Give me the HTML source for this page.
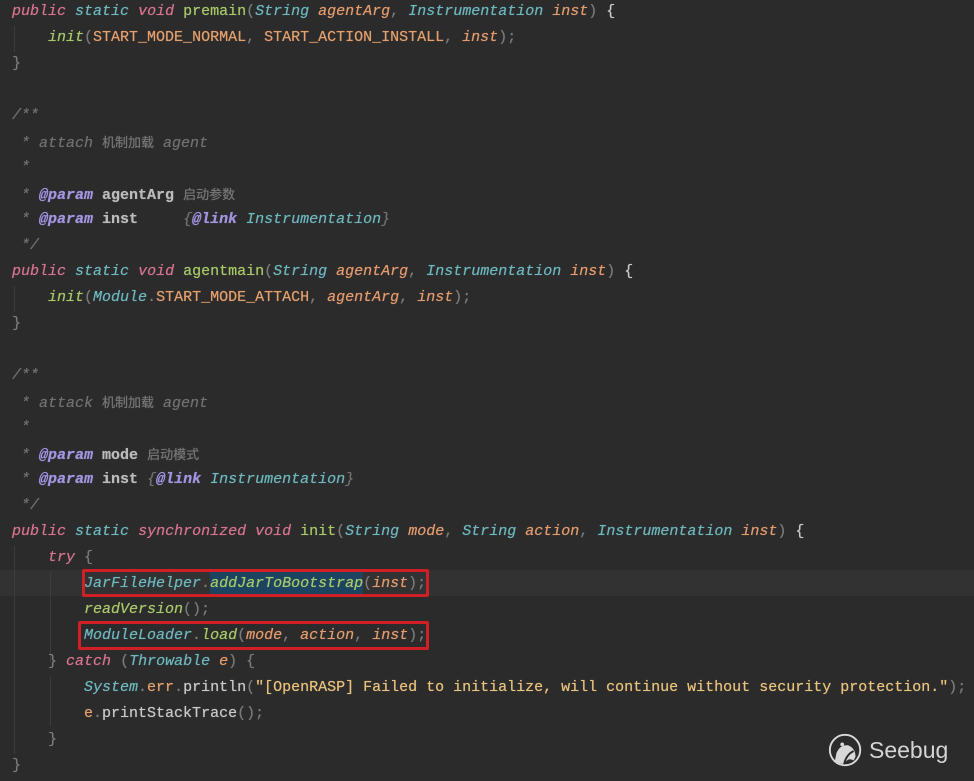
<!DOCTYPE html>
<html><head><meta charset="utf-8"><style>
html,body{margin:0;padding:0}
body{width:974px;height:781px;background:#2b2b2c;position:relative;overflow:hidden;font-family:"Liberation Mono","Noto Sans CJK SC",monospace;font-size:15px;color:#a9b7c6}
.l{position:absolute;left:12px;height:26px;line-height:26px;white-space:pre;text-shadow:0 0 0.6px currentColor}
i{font-style:italic}
.k{color:#d6728e}.s{color:#6cb6bc}.m{color:#a8c868}.t{color:#6cb6bc;font-style:italic}
.p{color:#e39a6c;font-style:italic}.c{color:#e39f6c}.g{color:#7a7a7a}.cm{color:#707070;font-style:italic}
.at{color:#a394e0;font-weight:bold;font-style:italic}.pn{color:#bbbbbb;font-weight:bold}
.st{color:#e8c27c}.w{color:#c9c9c9}
.cj{font-family:"Noto Sans CJK SC",sans-serif;font-size:13px;color:#767676;font-style:normal}
.guide{position:absolute;width:1px;background:#3c3c3c}
.box{position:absolute;border:3px solid #d01f25;box-sizing:border-box;border-radius:2px}
</style></head><body>
<div style="position:absolute;left:0;top:570px;width:974px;height:26px;background:#323233"></div>
<div class="guide" style="left:14px;top:26px;height:26px"></div>
<div class="guide" style="left:14px;top:286px;height:26px"></div>
<div class="guide" style="left:14px;top:546px;height:208px"></div>
<div class="guide" style="left:50px;top:572px;height:90px"></div>
<div class="guide" style="left:50px;top:676px;height:50px"></div>

<div class="l" style="top:-1px"><i class="k">public</i> <i class="s">static</i> <i class="k">void</i> <span class="m">premain</span><span class="g">(</span><span class="t">String</span> <span class="p">agentArg</span><span class="g">,</span> <span class="t">Instrumentation</span> <span class="p">inst</span><span class="g">)</span> <span class="w">{</span></div>
<div class="l" style="top:25px">    <i class="m">init</i><span class="g">(</span><span class="c">START_MODE_NORMAL</span><span class="g">,</span> <span class="c">START_ACTION_INSTALL</span><span class="g">,</span> <span class="p">inst</span><span class="g">);</span></div>
<div class="l" style="top:51px"><span class="g">}</span></div>
<div class="l" style="top:103px"><span class="cm">/**</span></div>
<div class="l" style="top:129px"><span class="cm"> * attach <span class="cj">机制加载</span> agent</span></div>
<div class="l" style="top:155px"><span class="cm"> *</span></div>
<div class="l" style="top:181px"><span class="cm"> * </span><span class="at">@param</span> <span class="pn">agentArg</span> <span class="cj">启动参数</span></div>
<div class="l" style="top:207px"><span class="cm"> * </span><span class="at">@param</span> <span class="pn">inst</span>     <span class="cm">{</span><span class="at">@link</span> <span class="t">Instrumentation</span><span class="cm">}</span></div>
<div class="l" style="top:233px"><span class="cm"> */</span></div>
<div class="l" style="top:259px"><i class="k">public</i> <i class="s">static</i> <i class="k">void</i> <span class="m">agentmain</span><span class="g">(</span><span class="t">String</span> <span class="p">agentArg</span><span class="g">,</span> <span class="t">Instrumentation</span> <span class="p">inst</span><span class="g">)</span> <span class="w">{</span></div>
<div class="l" style="top:285px">    <i class="m">init</i><span class="g">(</span><span class="t">Module</span><span class="g">.</span><span class="c">START_MODE_ATTACH</span><span class="g">,</span> <span class="p">agentArg</span><span class="g">,</span> <span class="p">inst</span><span class="g">);</span></div>
<div class="l" style="top:311px"><span class="g">}</span></div>
<div class="l" style="top:363px"><span class="cm">/**</span></div>
<div class="l" style="top:389px"><span class="cm"> * attack <span class="cj">机制加载</span> agent</span></div>
<div class="l" style="top:415px"><span class="cm"> *</span></div>
<div class="l" style="top:441px"><span class="cm"> * </span><span class="at">@param</span> <span class="pn">mode</span> <span class="cj">启动模式</span></div>
<div class="l" style="top:467px"><span class="cm"> * </span><span class="at">@param</span> <span class="pn">inst</span> <span class="cm">{</span><span class="at">@link</span> <span class="t">Instrumentation</span><span class="cm">}</span></div>
<div class="l" style="top:493px"><span class="cm"> */</span></div>
<div class="l" style="top:519px"><i class="k">public</i> <i class="s">static</i> <i class="k">synchronized</i> <i class="k">void</i> <span class="m">init</span><span class="g">(</span><span class="t">String</span> <span class="p">mode</span><span class="g">,</span> <span class="t">String</span> <span class="p">action</span><span class="g">,</span> <span class="t">Instrumentation</span> <span class="p">inst</span><span class="g">)</span> <span class="w">{</span></div>
<div class="l" style="top:545px">    <i class="k">try</i> <span class="g">{</span></div>
<div class="l" style="top:571px">        <span class="t">JarFileHelper</span><span class="g">.</span><i class="m" style="background:#1c4461;display:inline-block;height:24px;line-height:26px">addJarToBootstrap</i><span class="g">(</span><span class="p">inst</span><span class="g">);</span></div>
<div class="l" style="top:597px">        <i class="m">readVersion</i><span class="g">();</span></div>
<div class="l" style="top:623px">        <span class="t">ModuleLoader</span><span class="g">.</span><i class="m">load</i><span class="g">(</span><span class="p">mode</span><span class="g">,</span> <span class="p">action</span><span class="g">,</span> <span class="p">inst</span><span class="g">);</span></div>
<div class="l" style="top:649px">    <span class="g">}</span> <i class="k">catch</i> <span class="g">(</span><span class="t">Throwable</span> <span class="p">e</span><span class="g">)</span> <span class="g">{</span></div>
<div class="l" style="top:675px">        <span class="t">System</span><span class="g">.</span><span class="c">err</span><span class="g">.</span><span class="w">println</span><span class="g">(</span><span class="st">"[OpenRASP] Failed to initialize, will continue without security protection."</span><span class="g">);</span></div>
<div class="l" style="top:701px">        <span class="c">e</span><span class="g">.</span><span class="w">printStackTrace</span><span class="g">();</span></div>
<div class="l" style="top:727px">    <span class="g">}</span></div>
<div class="l" style="top:753px"><span class="g">}</span></div>

<div class="box" style="left:82px;top:569px;width:347px;height:28px"></div>
<div class="box" style="left:78px;top:621px;width:351px;height:29px"></div>

<svg style="position:absolute;left:827px;top:732px" width="38" height="38" viewBox="0 0 40 40">
<circle cx="19" cy="19" r="16" fill="none" stroke="#d8d8d8" stroke-width="2"/>
<path d="M8 32 L10 22 Q14 13 22 14 Q30 17 30 26 L28 30 Q22 26 18 34 Z" fill="#d8d8d8"/>
<path d="M18 34 Q20 24 28 20" stroke="#2b2b2c" stroke-width="2" fill="none"/>
<circle cx="16" cy="13" r="2" fill="#d8d8d8"/>
</svg>
<div style="position:absolute;left:869px;top:735px;font-family:'Liberation Sans',sans-serif;font-size:23px;color:#d4d4d4;line-height:30px">Seebug</div>
</body></html>
